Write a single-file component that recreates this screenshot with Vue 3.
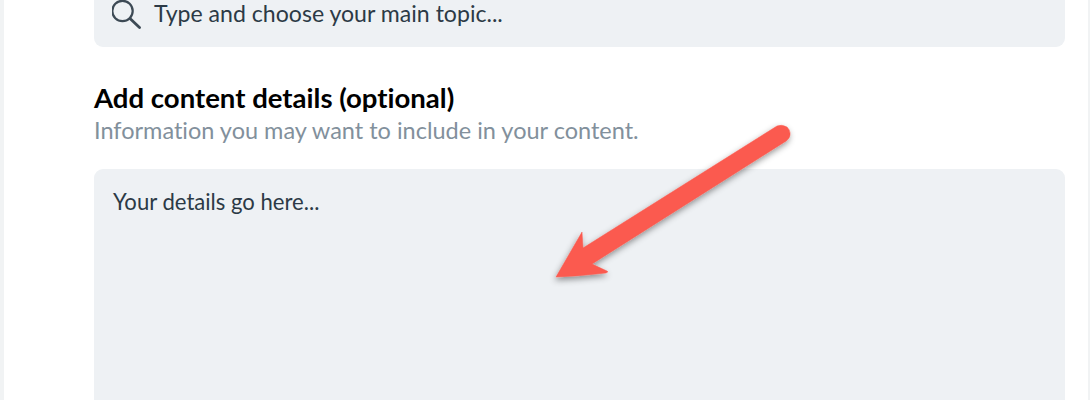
<script setup>
const topic = 'Type and choose your main topic...'
const details = 'Your details go here...'
</script>

<template>
  <div class="page">
    <main class="sheet">
      <div class="search">
        <svg class="lens" viewBox="0 0 30 30" width="30" height="30" aria-hidden="true">
          <circle cx="10.5" cy="12" r="10.2" fill="none" stroke="#3d4a55" stroke-width="2.2" />
          <path d="M18 19.5 L27.5 28.5" fill="none" stroke="#3d4a55" stroke-width="2.8" stroke-linecap="round" />
        </svg>
        <span class="search-text">{{ topic }}</span>
      </div>
      <h2 class="title">Add content details (optional)</h2>
      <p class="hint">Information you may want to include in your content.</p>
      <div class="area">{{ details }}</div>
    </main>
    <svg class="arrow" viewBox="0 0 1090 400" width="1090" height="400" aria-hidden="true">
      <defs>
        <filter id="arrow-shadow" x="-20%" y="-20%" width="140%" height="140%">
          <feDropShadow dx="-1" dy="3" stdDeviation="3" flood-color="#000" flood-opacity="0.42" />
        </filter>
      </defs>
      <path
        d="M777 126 Q782 124 787 127 Q792 132 789 138 Q787 141 783 143 L592 264 L607 271 Q609 272 606 273 Q580 276 556 277 L582 232 L583 248 Z"
        fill="#fb5a4f"
        stroke="#fb5a4f"
        stroke-width="0.5"
        stroke-linejoin="round"
        filter="url(#arrow-shadow)"
      />
    </svg>
  </div>
</template>

<style scoped>
.page {
  position: relative;
  width: 1090px;
  height: 400px;
  overflow: hidden;
  box-sizing: border-box;
  background: #ffffff;
  border-left: 4px solid #f1f3f4;
  border-right: 2px solid #f1f3f4;
  font-family: Lato, "Open Sans", sans-serif;
  font-variant-ligatures: none;
}
.sheet {
  display: flex;
  flex-direction: column;
  padding-left: 90px;
  padding-right: 23px;
}
.search {
  display: flex;
  align-items: center;
  gap: 12px;
  height: 48px;
  margin-top: -1px;
  padding: 0 0 20px 18px;
  box-sizing: border-box;
  background: #eef1f4;
  border-radius: 0 0 9px 9px;
}
.lens {
  flex: none;
  margin-top: 1px;
}
.search-text {
  margin-top: -1px;
  font-size: 23.1px;
  line-height: 28px;
  color: #2c3a46;
}
.title {
  margin: 36px 0 0;
  font-size: 27.55px;
  line-height: 30px;
  font-weight: 700;
  color: #000000;
}
.hint {
  margin: 3px 0 0;
  font-size: 23.5px;
  line-height: 28px;
  color: #82909c;
}
.area {
  height: 260px;
  margin-top: 25px;
  padding: 19px 19px;
  box-sizing: border-box;
  background: #eef1f4;
  border-radius: 9px;
  font-size: 22.1px;
  line-height: 28px;
  color: #2c3a46;
}
.arrow {
  position: absolute;
  left: -4px;
  top: 0;
  pointer-events: none;
}
</style>
